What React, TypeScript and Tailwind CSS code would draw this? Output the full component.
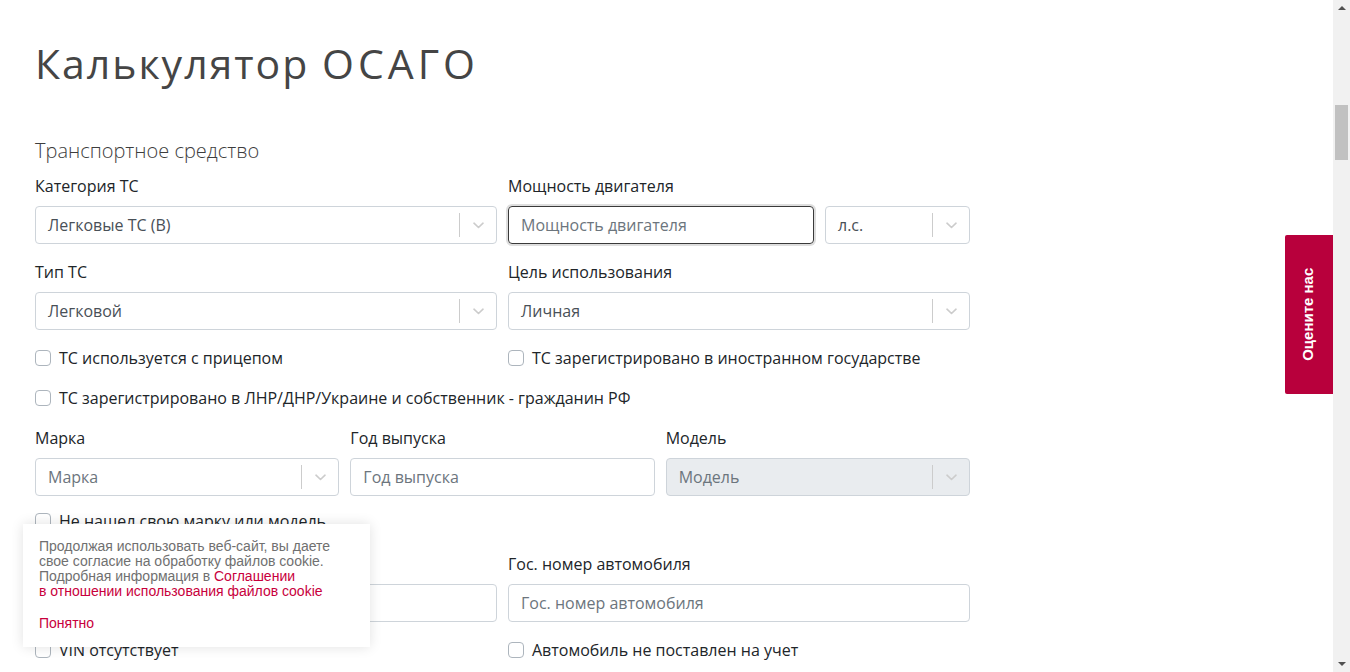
import React from "react";

const body = { fontFamily: '"Open Sans", "Liberation Sans", sans-serif' };

function Chevron() {
  return (
    <svg width="11" height="7" viewBox="0 0 11 7" fill="none">
      <path d="M1 1.2 L5.5 5.5 L10 1.2" stroke="#cccccc" strokeWidth="1.6" strokeLinecap="round" strokeLinejoin="round" />
    </svg>
  );
}

function Select({ value, placeholder, disabled, className = "" }: { value?: string; placeholder?: string; disabled?: boolean; className?: string }) {
  return (
    <div
      className={`flex h-[38px] items-center rounded border border-[#ced4da] ${disabled ? "bg-[#e9ecef]" : "bg-white"} ${className}`}
    >
      <span className={`flex-1 truncate pl-3 text-[16px] ${value ? "text-[#495057]" : "text-[#6c757d]"}`}>{value ?? placeholder}</span>
      <span className="h-6 w-px bg-[#cccccc]" />
      <span className="flex w-9 items-center justify-center">
        <Chevron />
      </span>
    </div>
  );
}

function Input({ placeholder, focused, className = "" }: { placeholder: string; focused?: boolean; className?: string }) {
  return (
    <div
      className={`flex h-[38px] items-center rounded px-3 text-[16px] text-[#6c757d] ${
        focused ? "border border-[#3a3a3a] shadow-[0_0_0_2px_rgba(0,0,0,0.13)]" : "border border-[#ced4da] bg-white"
      } ${className}`}
    >
      {placeholder}
    </div>
  );
}

function Label({ children }: { children: React.ReactNode }) {
  return <div className="mb-2 text-[16px] leading-6 text-[#212529]">{children}</div>;
}

function Check({ children, className = "" }: { children: React.ReactNode; className?: string }) {
  return (
    <div className={`flex h-6 items-center gap-2 text-[16px] leading-6 text-[#212529] ${className}`}>
      <span className="h-4 w-4 shrink-0 rounded-[4px] border border-[#adb5bd] bg-white" />
      <span>{children}</span>
    </div>
  );
}

export default function App() {
  return (
    <div className="flex h-[672px] w-[1350px] overflow-hidden bg-white" style={body}>
      <div className="relative flex-1">
        <div className="ml-[35px] w-[935px] pt-[39px]">
          <h1 className="text-[41px] leading-[48px] tracking-[2px] text-[#454545]">
            Калькулятор <span className="tracking-[4px]">ОСАГО</span>
          </h1>
          <h2 className="mt-[50px] text-[20px] font-light leading-7 text-[#3d3d3d]">Транспортное средство</h2>

          <div className="mt-[9px] flex flex-col gap-4">
            <div className="grid grid-cols-2 gap-[11px]">
              <div>
                <Label>Категория ТС</Label>
                <Select value="Легковые ТС (В)" />
              </div>
              <div>
                <Label>Мощность двигателя</Label>
                <div className="flex gap-[11px]">
                  <Input placeholder="Мощность двигателя" focused className="flex-1" />
                  <Select value="л.с." className="w-[145px]" />
                </div>
              </div>
            </div>

            <div className="grid grid-cols-2 gap-[11px]">
              <div>
                <Label>Тип ТС</Label>
                <Select value="Легковой" />
              </div>
              <div>
                <Label>Цель использования</Label>
                <Select value="Личная" />
              </div>
            </div>

            <div className="grid grid-cols-2 gap-[11px]">
              <Check>ТС используется с прицепом</Check>
              <Check>ТС зарегистрировано в иностранном государстве</Check>
            </div>

            <Check>ТС зарегистрировано в ЛНР/ДНР/Украине и собственник - гражданин РФ</Check>

            <div className="grid grid-cols-3 gap-[11px]">
              <div>
                <Label>Марка</Label>
                <Select placeholder="Марка" />
              </div>
              <div>
                <Label>Год выпуска</Label>
                <Input placeholder="Год выпуска" />
              </div>
              <div>
                <Label>Модель</Label>
                <Select placeholder="Модель" disabled />
              </div>
            </div>

            <Check className="-mt-[3px]">Не нашел свою марку или модель</Check>

            <div className="mt-[3px] grid grid-cols-2 gap-[11px]">
              <div>
                <Label>VIN</Label>
                <Input placeholder="VIN" />
              </div>
              <div>
                <Label>Гос. номер автомобиля</Label>
                <Input placeholder="Гос. номер автомобиля" />
              </div>
            </div>

            <div className="grid grid-cols-2 gap-[11px]">
              <Check>VIN отсутствует</Check>
              <Check>Автомобиль не поставлен на учет</Check>
            </div>
          </div>
        </div>

        {/* Rate us tab */}
        <div className="absolute right-0 top-[235px] flex h-[159px] w-[48px] items-center justify-center rounded-l-[2px] bg-[#b8003c]">
          <span
            className="-rotate-90 whitespace-nowrap text-[15px] font-bold text-white"
            style={{ fontFamily: '"Liberation Sans", Arial, sans-serif' }}
          >
            Оцените нас
          </span>
        </div>

        {/* Cookie banner */}
        <div
          className="absolute left-[23px] top-[524px] w-[347px] bg-white px-4 pb-4 pt-[15px] text-[14px] leading-[15px] text-[#707070] shadow-[0_0_12px_rgba(0,0,0,0.12)]"
          style={{ fontFamily: '"Liberation Sans", Arial, sans-serif' }}
        >
          <p>
            Продолжая использовать веб-сайт, вы даете
            <br />
            свое согласие на обработку файлов cookie.
            <br />
            Подробная информация в <span className="text-[#c8003c]">Соглашении</span>
            <br />
            <span className="text-[#c8003c]">в отношении использования файлов cookie</span>
          </p>
          <div className="mt-[17px] text-[#c8003c]">Понятно</div>
        </div>
      </div>

      {/* Scrollbar */}
      <div className="flex w-[17px] flex-col items-center bg-[#f1f1f1]">
        <div className="flex h-[13px] items-center justify-center pt-[2px]">
          <svg width="8" height="4" viewBox="0 0 8 4">
            <path d="M0 4 L4 0 L8 4 Z" fill="#505050" />
          </svg>
        </div>
        <div className="mt-[92px] h-[55px] w-[13px] bg-[#c1c1c1]" />
        <div className="flex-1" />
        <div className="flex h-[15px] items-center justify-center pb-[2px]">
          <svg width="8" height="4" viewBox="0 0 8 4">
            <path d="M0 0 L4 4 L8 0 Z" fill="#505050" />
          </svg>
        </div>
      </div>
    </div>
  );
}
